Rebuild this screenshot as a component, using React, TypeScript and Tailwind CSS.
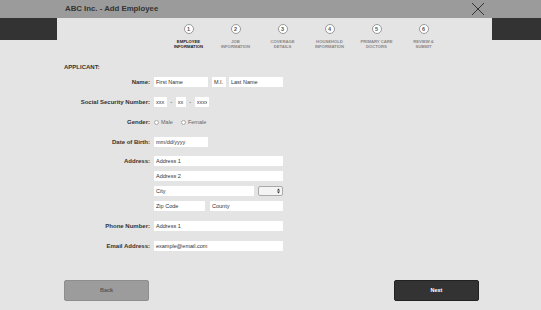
const steps = [
  { n: 1, top: "EMPLOYEE", bottom: "INFORMATION", active: true },
  { n: 2, top: "JOB", bottom: "INFORMATION" },
  { n: 3, top: "COVERAGE", bottom: "DETAILS" },
  { n: 4, top: "HOUSEHOLD", bottom: "INFORMATION" },
  { n: 5, top: "PRIMARY CARE", bottom: "DOCTORS" },
  { n: 6, top: "REVIEW &", bottom: "SUBMIT" },
];

function Field({ text, w }: { text: string; w: string }) {
  return (
    <input
      type="text"
      placeholder={text}
      className={`${w} h-[10px] shrink-0 border-0 bg-white px-[2px] py-0 text-[5.5px] leading-[10px] text-[#333] placeholder:text-[#333] outline-none`}
    />
  );
}

function Row({ label, children }: { label: string; children: React.ReactNode }) {
  return (
    <div className="flex h-[10px] items-center">
      <div className="w-[86px] shrink-0 text-right text-[6px] font-bold text-[#333]">{label}</div>
      <div className="ml-[4px] flex items-center">{children}</div>
    </div>
  );
}

function Radio({ label }: { label: string }) {
  return (
    <div className="flex items-center">
      <span className="h-[5px] w-[5px] rounded-full border-[0.5px] border-[#aaa] bg-white" />
      <span className="ml-[2px] text-[5.5px] text-[#666]">{label}</span>
    </div>
  );
}

export default function App() {
  return (
    <div className="h-[310px] w-[541px] overflow-hidden bg-[#e4e4e4] font-['Liberation_Sans',Arial,sans-serif]">
      {/* top bar */}
      <div className="flex h-[18px] items-center justify-between bg-[#9b9b9b] pl-[65px] pr-[56px]">
        <span className="text-[7.8px] font-bold text-[#333]">ABC Inc. - Add Employee</span>
        <svg width="14" height="14" viewBox="0 0 14 14" className="mt-[-1px]">
          <path d="M1 1L13 13M13 1L1 13" stroke="#333" strokeWidth="1" />
        </svg>
      </div>

      {/* steps */}
      <div className="flex h-[31px]">
        <div className="h-[22px] w-[57px] bg-[#333]" />
        <div className="flex flex-1 pl-[108px]">
          {steps.map((s) => (
            <div key={s.n} className="flex w-[47px] flex-col items-center">
              <div className="mt-[6px] flex h-[10px] w-[10px] items-center justify-center rounded-full border-[0.5px] border-[#999] bg-white text-[5.5px] font-bold text-[#555]">
                {s.n}
              </div>
              <div
                className={`mt-[4.5px] text-center text-[4.2px] font-bold leading-[5px] ${
                  s.active ? "text-[#222]" : "text-[#888]"
                }`}
              >
                {s.top}
                <br />
                {s.bottom}
              </div>
            </div>
          ))}
        </div>
        <div className="h-[22px] w-[49px] bg-[#333]" />
      </div>

      {/* form */}
      <div className="pl-[64px] pt-[14px]">
        <div className="text-[6px] font-bold leading-[8px] text-[#333]">APPLICANT:</div>
        <div className="mt-[6px] flex flex-col gap-[10px]">
          <Row label="Name:">
            <Field text="First Name" w="w-[54px]" />
            <Field text="M.I." w="ml-[4px] w-[14px]" />
            <Field text="Last Name" w="ml-[3px] w-[54px]" />
          </Row>
          <Row label="Social Security Number:">
            <Field text="xxx" w="w-[13px]" />
            <span className="mx-[3.5px] text-[5.5px] text-[#333]">-</span>
            <Field text="xx" w="w-[10px]" />
            <span className="mx-[3.5px] text-[5.5px] text-[#333]">-</span>
            <Field text="xxxx" w="w-[14px]" />
          </Row>
          <Row label="Gender:">
            <Radio label="Male" />
            <div className="ml-[8px]">
              <Radio label="Female" />
            </div>
          </Row>
          <Row label="Date of Birth:">
            <Field text="mm/dd/yyyy" w="w-[54px]" />
          </Row>
          <div className="-mt-[1px] flex flex-col gap-[5px]">
            <Row label="Address:">
              <Field text="Address 1" w="w-[129px]" />
            </Row>
            <Row label="">
              <Field text="Address 2" w="w-[129px]" />
            </Row>
            <Row label="">
              <Field text="City" w="w-[100px]" />
              <div className="ml-[4px] flex h-[10px] w-[25px] items-center justify-end rounded-[2px] border-[0.5px] border-[#aaa] bg-[#f4f4f4] pr-[2px]">
                <svg width="3" height="6" viewBox="0 0 3 6">
                  <path d="M0 2.5L1.5 0.5L3 2.5ZM0 3.5L1.5 5.5L3 3.5Z" fill="#333" />
                </svg>
              </div>
            </Row>
            <Row label="">
              <Field text="Zip Code" w="w-[51px]" />
              <Field text="County" w="ml-[5px] w-[73px]" />
            </Row>
          </div>
          <Row label="Phone Number:">
            <Field text="Address 1" w="w-[129px]" />
          </Row>
          <Row label="Email Address:">
            <Field text="example@email.com" w="w-[129px]" />
          </Row>
        </div>
      </div>

      {/* buttons */}
      <div className="mt-[29px] flex justify-between pl-[64px] pr-[62px]">
        <button className="flex h-[21px] w-[85px] items-center justify-center rounded-[2px] border-[0.5px] border-[#8e8e8e] bg-[#9c9c9c] text-[5.5px] font-bold text-[#555]">
          Back
        </button>
        <button className="flex h-[21px] w-[85px] items-center justify-center rounded-[2px] border-[0.5px] border-[#222] bg-[#333] text-[5.5px] font-bold text-white">
          Next
        </button>
      </div>
    </div>
  );
}
